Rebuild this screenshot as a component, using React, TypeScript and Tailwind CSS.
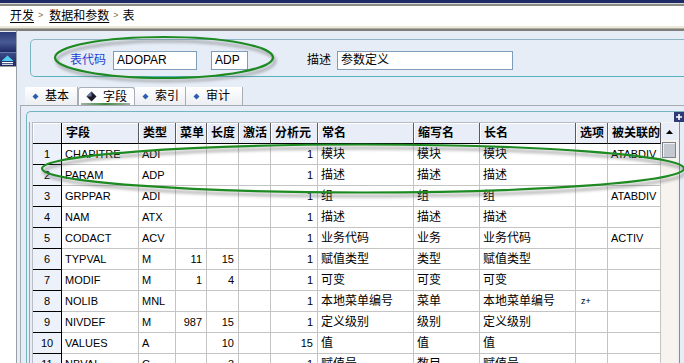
import React from 'react';

const rows: string[][] = [
  ['1', 'CHAPITRE', 'ADI', '', '', '', '1', '模块', '模块', '模块', '', 'ATABDIV'],
  ['2', 'PARAM', 'ADP', '', '', '', '1', '描述', '描述', '描述', '', ''],
  ['3', 'GRPPAR', 'ADI', '', '', '', '1', '组', '组', '组', '', 'ATABDIV'],
  ['4', 'NAM', 'ATX', '', '', '', '1', '描述', '描述', '描述', '', ''],
  ['5', 'CODACT', 'ACV', '', '', '', '1', '业务代码', '业务', '业务代码', '', 'ACTIV'],
  ['6', 'TYPVAL', 'M', '11', '15', '', '1', '赋值类型', '类型', '赋值类型', '', ''],
  ['7', 'MODIF', 'M', '1', '4', '', '1', '可变', '可变', '可变', '', ''],
  ['8', 'NOLIB', 'MNL', '', '', '', '1', '本地菜单编号', '菜单', '本地菜单编号', 'z+', ''],
  ['9', 'NIVDEF', 'M', '987', '15', '', '1', '定义级别', '级别', '定义级别', '', ''],
  ['10', 'VALUES', 'A', '', '10', '', '15', '值', '值', '值', '', ''],
  ['11', 'NBVAL', 'C', '', '3', '', '1', '赋值号', '数目', '赋值号', '', ''],
];

const headers = ['', '字段', '类型', '菜单', '长度', '激活', '分析元', '常名', '缩写名', '长名', '选项', '被关联的'];
const rightCols = [3, 4, 6];
const gridCols = 'grid grid-cols-[29px_77px_37px_31px_32px_32px_47px_96px_66px_96px_32px_53px]';

const Bullet = () => (
  <svg width="7" height="7" viewBox="0 0 7 7" className="shrink-0">
    <path d="M3.5 0.5 L6.5 3.5 L3.5 6.5 L0.5 3.5 Z" fill="#2a5db0" />
  </svg>
);

const BigDiamond = () => (
  <svg width="11" height="11" viewBox="0 0 11 11" className="shrink-0">
    <path d="M5.5 0.5 L10.5 5.5 L5.5 10.5 L0.5 5.5 Z" fill="#1a1a2a" />
    <path d="M5.5 0.5 L0.5 5.5 L5.5 5.5 Z" fill="#6a7a9a" />
  </svg>
);

const Tab = ({ label, selected, w }: { label: string; selected?: boolean; w: string }) => (
  <div
    className={`${w} h-[18px] flex items-center gap-[6px] pl-[7px] relative border-r border-[#a8aeb6] ${
      selected ? 'bg-[#fbfcfe] border-l border-t rounded-t-[3px] border-[#919b9c]' : 'bg-gradient-to-b from-[#ffffff] to-[#eceef2]'
    }`}
  >
    {selected ? <BigDiamond /> : <Bullet />}
    <span className="text-[12px] text-black leading-none">{label}</span>
    {selected && <div className="absolute left-[2px] right-[4px] bottom-0 h-[2px] bg-gradient-to-r from-[#9fb09f] via-[#3f8a3f] to-[#9fb09f]" />}
  </div>
);

export default function App() {
  return (
    <div className="relative w-[684px] h-[363px] overflow-hidden bg-[#e7edf7] flex flex-col font-['Liberation_Sans','Noto_Sans_CJK_SC',sans-serif] text-black">
      {/* top bar + breadcrumb */}
      <div className="h-[3px] bg-[#1e2a66]" />
      <div className="h-[1px] bg-[#d8d8d8]" />
      <div className="h-[2px] bg-[#8a8a86]" />
      <div className="h-[20px] bg-white flex items-center pl-[10px] gap-[4px] text-[12px]">
        <span className="underline underline-offset-2">开发</span>
        <span className="text-[9px] text-[#8a6a3a]">&gt;</span>
        <span className="underline underline-offset-2 ml-[2px]">数据和参数</span>
        <span className="text-[9px] text-[#8a6a3a]">&gt;</span>
        <span>表</span>
      </div>
      <div className="h-[2px] bg-[#ece9d8]" />
      <div className="h-[1px] bg-[#b0aea4]" />
      <div className="h-[2px] bg-[#7e7e7a]" />

      <div className="flex flex-1 min-h-0">
        {/* left collapsed panel */}
        <div className="w-[17px] shrink-0 flex flex-col border-r border-[#9aa0a8] bg-white">
          <div className="h-[1px] bg-[#e7edf7]" />
          <div className="h-[21px] bg-gradient-to-b from-[#2a3a7a] via-[#4a5a92] to-[#1e2a66] border-b border-[#6a78a8]" />
          <div className="h-[13px] bg-gradient-to-b from-[#3a4a86] to-[#1e2a66] flex items-center pl-[1px]">
            <svg width="13" height="10" viewBox="0 0 13 10">
              <path d="M6.5 0.5 L12.5 6 L0.5 6 Z" fill="#4fd0f0" />
              <path d="M1 7.5 H12 M1 9.3 H12" stroke="#ffffff" strokeWidth="1" />
            </svg>
          </div>
          <div className="h-[1px] bg-[#a0a0a0]" />
          <div className="flex-1 bg-white" />
        </div>

        {/* main */}
        <div className="flex-1 min-w-0 flex flex-col">
          {/* group box */}
          <div className="mt-[8px] ml-[13px] h-[38px] rounded-l-[5px] border border-r-0 border-t-[#8fb4c4] border-l-[#7ab4c0] border-b-[#55b2bc] flex items-start pt-[11px] pl-[39px] text-[12px]">
            <span className="text-[#1a3fd0] leading-[19px] w-[36px]">表代码</span>
            <div className="ml-[7px] w-[84px] h-[19px] bg-white border border-[#7f9db9] pl-[3px] text-[12px] leading-[17px]">ADOPAR</div>
            <div className="ml-[14px] w-[37px] h-[19px] bg-white border border-[#7f9db9] pl-[3px] text-[12px] leading-[17px]">ADP</div>
            <span className="ml-[59px] leading-[19px]">描述</span>
            <div className="ml-[6px] w-[176px] h-[19px] bg-white border border-[#7f9db9] pl-[3px] leading-[17px]">参数定义</div>
          </div>

          {/* tabs */}
          <div className="mt-[10px] ml-[8px] flex items-end">
            <Tab label="基本" w="w-[53px]" />
            <Tab label="字段" w="w-[57px]" selected />
            <Tab label="索引" w="w-[51px]" />
            <Tab label="审计" w="w-[57px]" />
          </div>

          {/* tab page */}
          <div className="flex-1 min-h-0 ml-[3px] border-l border-t border-[#a6aab2] pl-[5px] pt-[5px] flex flex-col">
            <div className="relative flex-1 min-h-0 border-l border-t rounded-tl-[5px] border-[#74b4be] pl-[2px] pt-[10px] flex flex-col">
              <div className="absolute right-0 top-0 w-[10px] h-[10px] bg-[#2e3a78] flex items-center justify-center">
                <svg width="8" height="8" viewBox="0 0 8 8">
                  <path d="M4 1 V7 M1 4 H7" stroke="#ffffff" strokeWidth="1.6" />
                </svg>
              </div>
              <div className="flex-1 min-h-0 flex border-l border-[#8aa4d0] pl-[2px] pr-[4px]">
                <div className="flex-1 min-h-0 flex border-r border-[#6c8fd0]">
                  {/* grid */}
                  <div className="w-[629px] border-l border-t border-[#b8bcc4] bg-white">
                    <div className={gridCols}>
                      {headers.map((h, i) => (
                        <div
                          key={i}
                          className={`h-[21px] bg-[#e8edf7] border-b border-black border-r ${
                            i === 0 ? 'border-r-black' : 'border-r-[#5a5a5a]'
                          } shadow-[inset_1px_1px_0_#ffffff] pl-[4px] text-[12px] font-bold leading-[20px] whitespace-nowrap overflow-hidden`}
                        >
                          {h}
                        </div>
                      ))}
                    </div>
                    {rows.map((r, ri) => (
                      <div key={ri} className={gridCols}>
                        {r.map((c, ci) => {
                          if (ci === 0)
                            return (
                              <div key={ci} className="h-[21px] bg-[#edf1f9] border-r border-b border-black text-center text-[11px] leading-[20px]">
                                {c}
                              </div>
                            );
                          const isRight = rightCols.includes(ci);
                          const isCjk = ci >= 7 && ci <= 9;
                          return (
                            <div
                              key={ci}
                              className={`h-[21px] border-r border-b border-[#c4c4c4] whitespace-nowrap overflow-hidden leading-[20px] ${
                                isRight ? 'text-right pr-[4px]' : 'pl-[3px]'
                              } ${isCjk ? 'text-[12px]' : ci === 10 ? 'text-[9px] pl-[5px]' : 'text-[11px]'}`}
                            >
                              {c}
                            </div>
                          );
                        })}
                      </div>
                    ))}
                  </div>
                  {/* scrollbar */}
                  <div className="w-[16px] pt-[1px] flex flex-col bg-[#f7f4ef]">
                    <div className="h-[17px] bg-[#e8edf7] flex items-center justify-center">
                      <svg width="7" height="4" viewBox="0 0 7 4">
                        <path d="M3.5 0 L7 4 L0 4 Z" fill="#000" />
                      </svg>
                    </div>
                    <div className="mt-[2px] mx-[1px] h-[16px] bg-[#c4c8d0] border border-[#7c828e] shadow-[inset_1px_1px_0_#eef0f4]" />
                    <div className="flex-1" />
                  </div>
                  <div className="w-[2px] bg-[#eef0f6]" />
                </div>
              </div>
            </div>
          </div>
        </div>
      </div>

      {/* green annotation ellipses */}
      <svg className="absolute left-0 top-0 pointer-events-none" width="684" height="363" viewBox="0 0 684 363">
        <defs>
          <filter id="blur" x="-10%" y="-50%" width="120%" height="200%">
            <feGaussianBlur stdDeviation="1.6" />
          </filter>
        </defs>
        <ellipse cx="166" cy="61" rx="109" ry="20" fill="none" stroke="#606060" strokeWidth="3" opacity="0.45" filter="url(#blur)" />
        <ellipse cx="164" cy="57.5" rx="109" ry="20.5" fill="none" stroke="#1d8a22" strokeWidth="2.2" />
        <ellipse cx="365" cy="172" rx="321" ry="24" fill="none" stroke="#606060" strokeWidth="3" opacity="0.45" filter="url(#blur)" />
        <ellipse cx="363" cy="168.5" rx="321" ry="24" fill="none" stroke="#1d8a22" strokeWidth="2.2" />
      </svg>
    </div>
  );
}
